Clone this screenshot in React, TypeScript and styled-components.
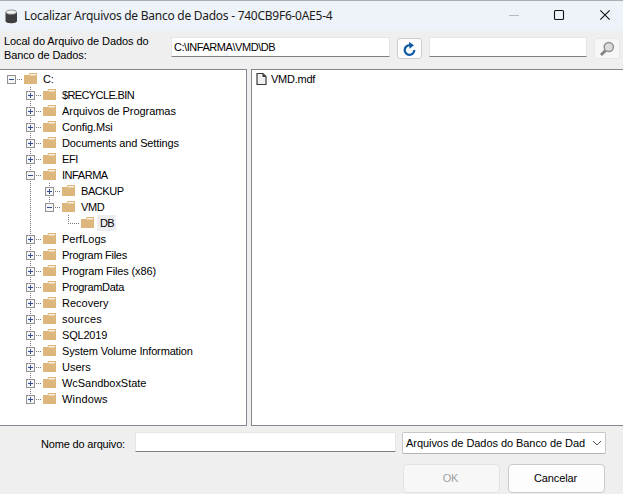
import React from "react";
import styled, { createGlobalStyle } from "styled-components";

const Global = createGlobalStyle`
  * { box-sizing: border-box; }
  html, body { margin: 0; padding: 0; overflow: hidden; }
  body { font: 11px/14px "Liberation Sans", Arial, sans-serif; color: #000; }
`;

const Dialog = styled.main`
  width: 623px;
  height: 494px;
  display: flex;
  flex-direction: column;
  background: #efefef;
  overflow: hidden;
`;

const TitleBar = styled.header`
  height: 31px;
  flex: none;
  display: flex;
  align-items: center;
  padding-left: 5px;
  background: #eef3f9;
  border-top: 1px solid #acadb0;
`;

const Title = styled.h1`
  margin: 0 auto 0 6px;
  font: 400 12px/16px "Noto Sans", "Open Sans", sans-serif;
  letter-spacing: -0.26px;
  color: #1b1b1b;
  white-space: nowrap;
`;

const WindowControls = styled.div`
  display: flex;
  width: 115px;
  height: 30px;
`;

const Toolbar = styled.div`
  height: 38px;
  flex: none;
  display: flex;
  align-items: flex-start;
  padding: 6px 0 0 4px;
`;

const Text = styled.span<{ $spacing?: number }>`
  white-space: nowrap;
  letter-spacing: ${(p) => p.$spacing ?? 0}px;
`;

const LocationLabel = styled.label`
  display: flex;
  flex-direction: column;
  width: 167px;
  line-height: 14px;
  margin-top: -3px;
`;

const Field = styled.div<{ $width: number; $left?: number }>`
  width: ${(p) => p.$width}px;
  height: 20px;
  flex: none;
  margin-left: ${(p) => p.$left ?? 0}px;
  padding: 2px 2px 0;
  background: #fff;
  border: 1px solid #e6e6e6;
  border-bottom-color: #808083;
  border-radius: 1px;
`;

const IconButton = styled.button<{ $width: number; $left: number; $disabled?: boolean }>`
  width: ${(p) => p.$width}px;
  height: 21px;
  flex: none;
  margin: 1px 0 0 ${(p) => p.$left}px;
  padding: 0;
  display: flex;
  align-items: center;
  justify-content: center;
  background: ${(p) => (p.$disabled ? "#f7f7f7" : "#fdfdfd")};
  border: 1px solid ${(p) => (p.$disabled ? "#e8e8e8" : "#cdcdcd")};
  border-radius: 3px;
`;

const Panels = styled.div`
  height: 357px;
  flex: none;
  display: grid;
  grid-template-columns: 247px 372px;
  column-gap: 4px;
`;

const Panel = styled.section`
  background: #fff;
  border: 1px solid #828790;
  overflow: hidden;
`;

const TreePanel = styled(Panel)`
  border-left: 0;
  padding: 1px 0 0 2px;
`;

const FilePanel = styled(Panel)`
  border-right: 0;
  padding: 1px 0 0 4px;
`;

const Row = styled.div`
  height: 16px;
  display: flex;
  align-items: center;
`;

const Guide = styled.svg`
  width: 19px;
  height: 16px;
  flex: none;
  overflow: visible;
`;

const FolderSvg = styled.svg`
  width: 15px;
  height: 16px;
  flex: none;
  margin: 0 2px;
`;

const Label = styled.span<{ $spacing: number; $selected?: boolean }>`
  height: 16px;
  padding: 0 2px 0 3px;
  line-height: 16px;
  white-space: nowrap;
  letter-spacing: ${(p) => p.$spacing}px;
  background: ${(p) => (p.$selected ? "#eeeef0" : "transparent")};
`;

const FileName = styled(Label)`
  padding-left: 4px;
`;

const Footer = styled.footer`
  flex: 1;
  display: flex;
  flex-direction: column;
`;

const NameRow = styled.div`
  height: 38px;
  flex: none;
  display: flex;
  padding: 6px 0 0 41px;
`;

const NameLabel = styled.label`
  width: 94px;
  padding-top: 5px;
`;

const Select = styled.div`
  width: 204px;
  height: 22px;
  margin-left: 6px;
  display: flex;
  align-items: center;
  justify-content: space-between;
  padding: 0 3px;
  background: #fff;
  border: 1px solid #c8c8c8;
  border-bottom-color: #b5b5b5;
  border-radius: 2px;
`;

const Actions = styled.div`
  display: flex;
  gap: 8px;
  padding-left: 403px;
`;

const Button = styled.button<{ $disabled?: boolean }>`
  width: 97px;
  height: 29px;
  padding: 0 2px 1px 0;
  font: inherit;
  letter-spacing: -0.1px;
  color: ${(p) => (p.$disabled ? "#a0a0a0" : "#000")};
  background: ${(p) => (p.$disabled ? "#f7f7f7" : "#fdfdfd")};
  border: 1px solid ${(p) => (p.$disabled ? "#e3e3e3" : "#cbcbcb")};
  border-radius: 4px;
`;

interface Item {
  name: string;
  level: number;
  spacing: number;
  open?: boolean;
  last?: boolean;
}

const items: Item[] = [
  { name: "C:", level: 0, spacing: -0.2, open: true },
  { name: "$RECYCLE.BIN", level: 1, spacing: -0.62 },
  { name: "Arquivos de Programas", level: 1, spacing: -0.05 },
  { name: "Config.Msi", level: 1, spacing: -0.13 },
  { name: "Documents and Settings", level: 1, spacing: -0.14 },
  { name: "EFI", level: 1, spacing: -0.4 },
  { name: "INFARMA", level: 1, spacing: -0.45, open: true },
  { name: "BACKUP", level: 2, spacing: -0.45 },
  { name: "VMD", level: 2, spacing: -0.4, open: true, last: true },
  { name: "DB", level: 3, spacing: -0.6, last: true },
  { name: "PerfLogs", level: 1, spacing: 0 },
  { name: "Program Files", level: 1, spacing: -0.27 },
  { name: "Program Files (x86)", level: 1, spacing: -0.14 },
  { name: "ProgramData", level: 1, spacing: -0.3 },
  { name: "Recovery", level: 1, spacing: 0 },
  { name: "sources", level: 1, spacing: 0.2 },
  { name: "SQL2019", level: 1, spacing: -0.2 },
  { name: "System Volume Information", level: 1, spacing: -0.15 },
  { name: "Users", level: 1, spacing: 0 },
  { name: "WcSandboxState", level: 1, spacing: -0.05 },
  { name: "Windows", level: 1, spacing: 0.15, last: true },
];

const dots = { stroke: "#777", strokeDasharray: "1 1", fill: "none" };

function Expander({ item }: { item: Item }) {
  const leaf = item.level === 3;
  return (
    <Guide viewBox="0 0 19 16" shapeRendering="crispEdges">
      {item.level > 0 && <path d={item.last ? "M9.5 0V8" : "M9.5 0V16"} {...dots} />}
      <path d={leaf ? "M9 8.5H21" : "M15 8.5H21"} {...dots} />
      {!leaf && (
        <>
          <rect x="5.5" y="4.5" width="8" height="8" fill="#f6f6f6" stroke="#919191" />
          <path d={item.open ? "M7 8.5H12" : "M7 8.5H12M9.5 6V11"} stroke="#344f91" />
        </>
      )}
    </Guide>
  );
}

function TreeRow({ item }: { item: Item }) {
  return (
    <Row>
      {Array.from({ length: item.level }, (_, i) => (
        <Guide key={i} viewBox="0 0 19 16" shapeRendering="crispEdges">
          {i === 1 && <path d="M9.5 0V16" {...dots} />}
        </Guide>
      ))}
      <Expander item={item} />
      <FolderSvg viewBox="0 0 15 16">
        <path d="M1 4H5.5L6.5 2H14V13H1Z" fill="#dcb67a" />
        <path d="M6 4.5L7 3H13V4.5Z" fill="#f6eddf" />
      </FolderSvg>
      <Label $spacing={item.spacing} $selected={item.name === "DB"}>{item.name}</Label>
    </Row>
  );
}

export default function App() {
  return (
    <>
      <Global />
      <Dialog>
        <TitleBar>
          <svg width="13" height="15" viewBox="0 0 13 15">
            <path d="M0.5 3.2V12C0.5 15 12 15 12 12V3.2Z" fill="#3f3f41" />
            <ellipse cx="6.25" cy="3.2" rx="5.2" ry="2.1" fill="#f2f2f2" stroke="#77777a" strokeWidth="0.8" />
          </svg>
          <Title>Localizar Arquivos de Banco de Dados - 740CB9F6-0AE5-4</Title>
          <WindowControls>
            <svg width="115" height="30" viewBox="0 0 115 30" fill="none">
              <path d="M1 14.5H11" stroke="#b7bbc0" />
              <rect x="46.5" y="9.5" width="9" height="9" rx="1" stroke="#111" strokeWidth="1.1" />
              <path d="M92.3 9.3L101.7 18.7M101.7 9.3L92.3 18.7" stroke="#111" strokeWidth="1.1" />
            </svg>
          </WindowControls>
        </TitleBar>
        <Toolbar>
          <LocationLabel>
            <Text $spacing={-0.08}>Local do Arquivo de Dados do</Text>
            <Text $spacing={-0.12}>Banco de Dados:</Text>
          </LocationLabel>
          <Field $width={219}><Text $spacing={-0.45}>C:\INFARMA\VMD\DB</Text></Field>
          <IconButton $width={25} $left={7} aria-label="Atualizar">
            <svg width="15" height="15" viewBox="0 0 15 15">
              <path d="M8 4.3A4.8 4.8 0 1 0 12.3 9" fill="none" stroke="#0b58a5" strokeWidth="2.2" />
              <path d="M7 1L12 4.3L7.5 7.8Z" fill="#0b58a5" />
            </svg>
          </IconButton>
          <Field $width={158} $left={7} />
          <IconButton $width={26} $left={7} $disabled aria-label="Pesquisar">
            <svg width="16" height="16" viewBox="0 0 16 16" fill="none">
              <path d="M6.5 9.5L2 14" stroke="#858585" strokeWidth="3" />
              <circle cx="9.8" cy="6" r="4.6" fill="#dcdcdc" stroke="#919191" strokeWidth="1.5" />
            </svg>
          </IconButton>
        </Toolbar>
        <Panels>
          <TreePanel>{items.map((item) => <TreeRow key={item.name} item={item} />)}</TreePanel>
          <FilePanel>
            <Row>
              <svg width="11" height="14" viewBox="0 0 11 14">
                <path d="M1 1.5H7L10 4.5V12.5H1Z" fill="#f0eff1" stroke="#3b3b3d" strokeWidth="1.2" />
                <path d="M6.5 1.5V5H10Z" fill="#3b3b3d" />
              </svg>
              <FileName $spacing={-0.25}>VMD.mdf</FileName>
            </Row>
          </FilePanel>
        </Panels>
        <Footer>
          <NameRow>
            <NameLabel><Text $spacing={-0.18}>Nome do arquivo:</Text></NameLabel>
            <Field $width={261} />
            <Select>
              <Text $spacing={-0.06}>Arquivos de Dados do Banco de Dad</Text>
              <svg width="10" height="6" viewBox="0 0 10 6" fill="none">
                <path d="M1 1L5 5L9 1" stroke="#555" />
              </svg>
            </Select>
          </NameRow>
          <Actions>
            <Button $disabled>OK</Button>
            <Button>Cancelar</Button>
          </Actions>
        </Footer>
      </Dialog>
    </>
  );
}
